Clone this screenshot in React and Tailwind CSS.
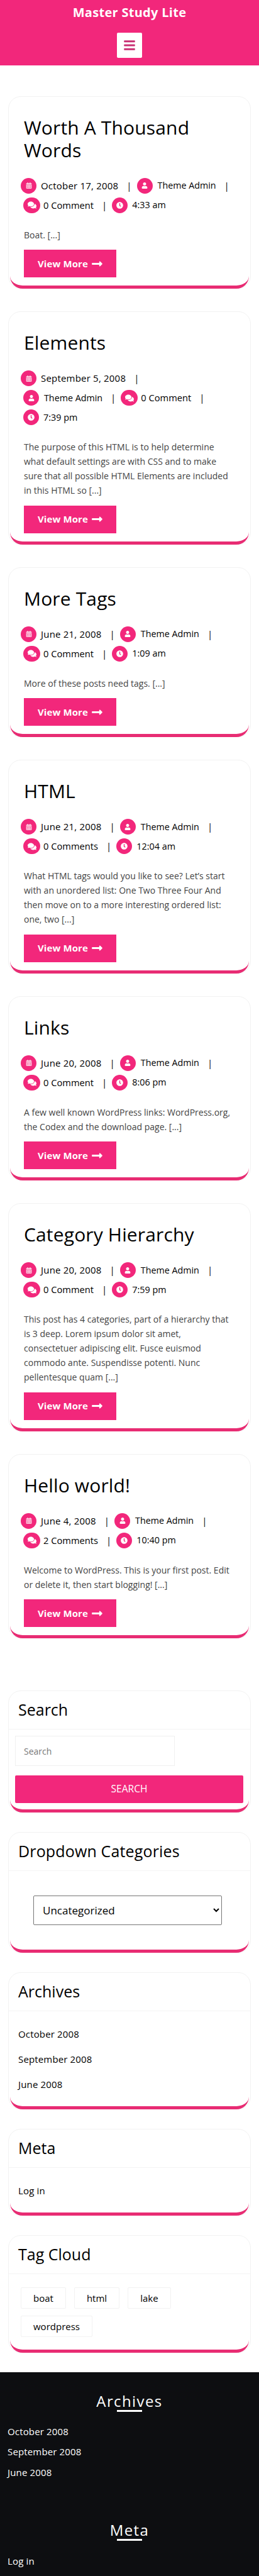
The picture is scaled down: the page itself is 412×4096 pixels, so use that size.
import React from "react";
import { FaBars, FaRegCalendarAlt, FaCalendarAlt, FaComments, FaUser, FaClock, FaLongArrowAltRight } from "react-icons/fa";

const posts = [
  { t: "Worth A Thousand Words", d: "October 17, 2008", c: "0 Comment", h: "4:33 am", x: "Boat. [...]" },
  { t: "Elements", d: "September 5, 2008", c: "0 Comment", h: "7:39 pm", x: "The purpose of this HTML is to help determine what default settings are with CSS and to make sure that all possible HTML Elements are included in this HTML so [...]" },
  { t: "More Tags", d: "June 21, 2008", c: "0 Comment", h: "1:09 am", x: "More of these posts need tags. [...]" },
  { t: "HTML", d: "June 21, 2008", c: "0 Comments", h: "12:04 am", x: "What HTML tags would you like to see? Let\u2019s start with an unordered list: One Two Three Four And then move on to a more interesting ordered list: one, two [...]" },
  { t: "Links", d: "June 20, 2008", c: "0 Comment", h: "8:06 pm", x: "A few well known WordPress links: WordPress.org, the Codex and the download page. [...]" },
  { t: "Category Hierarchy", d: "June 20, 2008", c: "0 Comment", h: "7:59 pm", x: "This post has 4 categories, part of a hierarchy that is 3 deep. Lorem ipsum dolor sit amet, consectetuer adipiscing elit. Fusce euismod commodo ante. Suspendisse potenti. Nunc pellentesque quam [...]" },
  { t: "Hello world!", d: "June 4, 2008", c: "2 Comments", h: "10:40 pm", x: "Welcome to WordPress. This is your first post. Edit or delete it, then start blogging! [...]" },
];

function Meta({ icon, text, sep, circle = "w-[25px]", gap = "mr-[7px]", size = "text-[15px]", first }) {
  return (
    <span className={`inline-flex items-center whitespace-nowrap h-[31px] ${first ? "-ml-[4px]" : ""}`}>
      <span className={`${circle} ${gap} h-[25px] rounded-full bg-[#f2277b] flex items-center justify-center text-white`}>
        {icon}
      </span>
      <span className={`${size} text-black`}>{text}</span>
      {sep && <span className="text-[15px] text-black ml-[13px]">|</span>}
    </span>
  );
}

function Underline() {
  return <span className="absolute left-[2px] right-[2px] bottom-[-1px] h-[20px] rounded-b-[20px] border-b-[5px] border-[#e82c73]" />;
}

function Post({ p }) {
  return (
    <article className="relative mb-[36px] rounded-[20px] border border-[#f2f2f2] bg-white pt-[31px] px-[24px] pb-[17px]">
      <h2 className="text-[30px] leading-[36px] tracking-[0.15px] text-black font-normal">{p.t}</h2>
      <div className="mt-[23px] -ml-[1px] flex flex-wrap gap-x-[8px]">
        <Meta first icon={<FaCalendarAlt className="text-[10px] opacity-80" />} text={p.d} sep size="text-[15px] tracking-[0.2px]" />
        <Meta icon={<FaUser className="text-[10px]" />} text="Theme Admin" sep gap="mr-[8px]" size="text-[14.3px]" />
        <Meta icon={<FaComments className="text-[14px]" />} text={p.c} sep circle="w-[27px]" gap="mr-[5px]" size="text-[14.7px]" />
        <Meta icon={<FaClock className="text-[11px]" />} text={p.h} size="text-[14.4px]" />
      </div>
      <p className="mt-[20px] mb-[12.5px] text-[14px] leading-[23px] text-[#444]">{p.x}</p>
      <a className="flex items-center w-[147px] h-[44px] pl-[22px] bg-[#f2277b] text-white font-bold text-[15px] tracking-[0.1px] gap-[5px]">
        View More <FaLongArrowAltRight className="text-[19px]" />
      </a>
      <Underline />
    </article>
  );
}

function Widget({ title, children, pad, mb = "mb-[31px]", titleCls = "" }) {
  return (
    <section className={`relative rounded-[20px] border border-[#f2f2f2] bg-white ${mb}`}>
      <h3 className={`h-[61px] flex items-center px-[15px] text-[25px] text-black border-b border-[#f4f4f4] font-normal ${titleCls}`}>{title}</h3>
      <div className={pad}>{children}</div>
      <Underline />
    </section>
  );
}

function FooterTitle({ children }) {
  return (
    <div className="relative text-center text-[24px] leading-[32px] tracking-[1.4px]">
      {children}
      <span className="absolute left-1/2 -translate-x-1/2 bottom-[-1px] w-[40px] h-[3px] bg-white" />
    </div>
  );
}

export default function App() {
  return (
    <div className="w-[412px] bg-white font-['Open_Sans','Noto_Sans',sans-serif] overflow-hidden">
      <header className="h-[104px] bg-[#f2277b] flex flex-col items-center">
        <div className="h-[40px] flex items-center text-white font-bold text-[20px] tracking-[0.3px]">Master Study Lite</div>
        <button className="mt-[12px] w-[40px] h-[40px] bg-white rounded-[2px] flex items-center justify-center text-[#c92f73]">
          <FaBars className="text-[20px]" />
        </button>
      </header>
      <main className="px-[13px] pt-[48.5px]">
        {posts.map((p) => <Post key={p.t} p={p} />)}
        <div className="h-[47px]" />
        <Widget title="Search" pad="pl-[10px] pr-[11px] pt-[10px] pb-[14px]">
          <input placeholder="Search" className="block w-[254px] h-[48px] border border-[#f0f0f0] px-[13px] text-[14px] placeholder:text-[#777] mb-[15px]" />
          <button className="block w-full h-[44px] bg-[#f2277b] text-white text-[15.6px] rounded-[2px]">SEARCH</button>
        </Widget>
        <Widget title="Dropdown Categories" titleCls="tracking-[0.15px]" pad="pl-[39px] pt-[39px] pb-[43px]">
          <select className="block w-[300px] h-[47px] border border-[#767676] rounded-[2px] text-[17px] px-[10px] bg-white text-black">
            <option>Uncategorized</option>
          </select>
        </Widget>
        <Widget title="Archives" pad="px-[15px] pt-[16px] pb-[19px]">
          <ul className="text-[15px] leading-[40px] tracking-[0.15px] text-black">
            <li>October 2008</li><li>September 2008</li><li>June 2008</li>
          </ul>
        </Widget>
        <Widget title="Meta" pad="px-[15px] pt-[16px] pb-[19px]">
          <div className="text-[15px] leading-[40px] tracking-[0.15px] text-black">Log in</div>
        </Widget>
        <Widget title="Tag Cloud" pad="pl-[19px] pr-[15px] pt-[21px] pb-[24px]" mb="mb-[30.5px]">
          <div className="flex flex-wrap gap-x-[13px] gap-y-[11px]">
            {["boat", "html", "lake", "wordpress"].map((t) => (
              <span key={t} className="px-[19px] h-[34px] leading-[32px] text-[15px] text-black border border-[#f2f2f2] rounded-[2px]">{t}</span>
            ))}
          </div>
        </Widget>
      </main>
      <footer className="bg-[#0d0e11] text-white px-[12px] pt-[30px] pb-[10px]">
        <FooterTitle>Archives</FooterTitle>
        <ul className="mt-[16px] text-[15px] leading-[32.5px] tracking-[0.15px]">
          <li>October 2008</li><li>September 2008</li><li>June 2008</li>
        </ul>
        <div className="h-[60px]" />
        <FooterTitle>Meta</FooterTitle>
        <div className="mt-[17px] text-[15px] leading-[32.5px] tracking-[0.15px]">Log in</div>
      </footer>
    </div>
  );
}
